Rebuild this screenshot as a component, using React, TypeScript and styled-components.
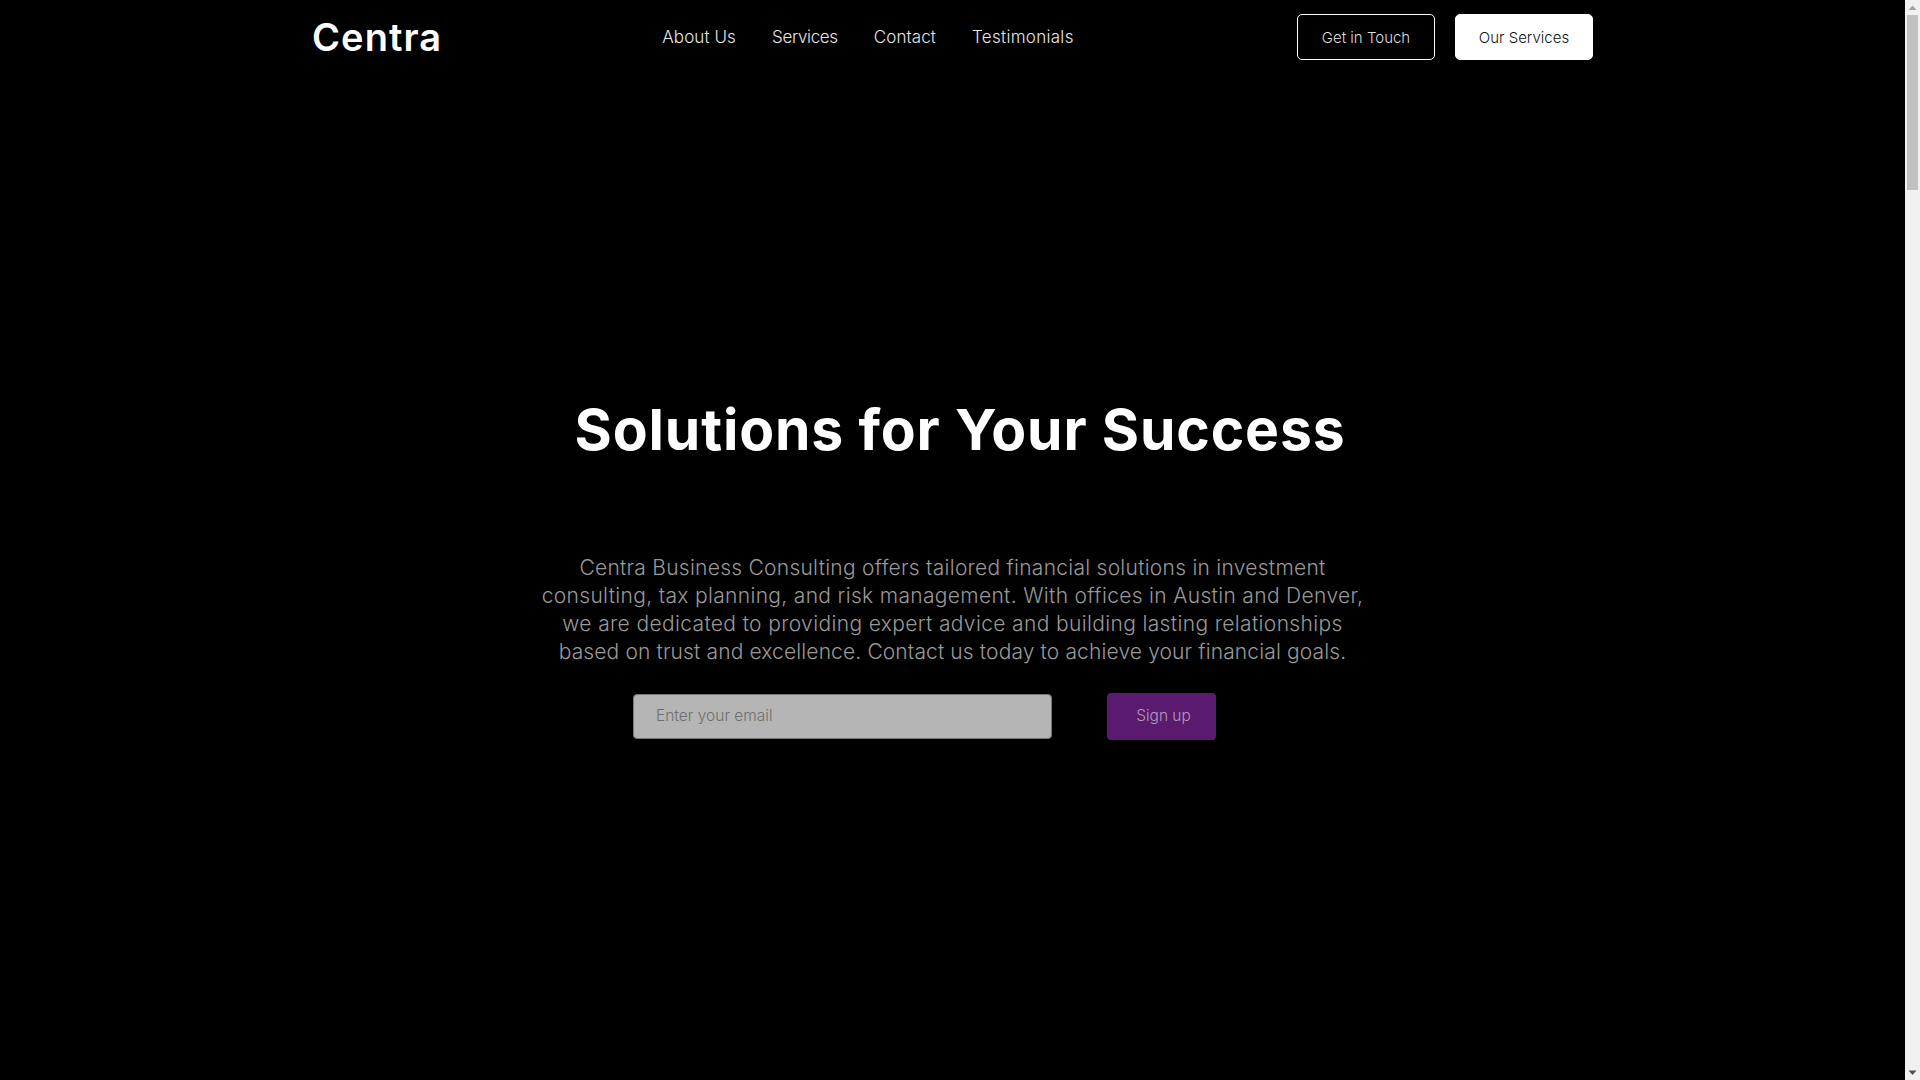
import React from 'react'
import styled, { createGlobalStyle } from 'styled-components'

const GlobalStyle = createGlobalStyle`
	body {
		margin: 0;
		background: #000;
		font-family: Inter, "Liberation Sans", sans-serif;
	}
`

const navLinks = [
	{ label: 'About Us', tracking: 0.1 },
	{ label: 'Services', tracking: -0.35 },
	{ label: 'Contact', tracking: 0.1 },
	{ label: 'Testimonials', tracking: 0.3 }
]

const introLines = [
	{ text: 'Centra Business Consulting offers tailored financial solutions in investment', tracking: 0.26 },
	{ text: 'consulting, tax planning, and risk management. With offices in Austin and Denver,', tracking: 0.33 },
	{ text: 'we are dedicated to providing expert advice and building lasting relationships', tracking: 0.36 },
	{ text: 'based on trust and excellence. Contact us today to achieve your financial goals.', tracking: 0.13 }
]

const App = () => {
	return (
		<Page>
			<GlobalStyle />
			<Main>
				<Header>
					<Logo>Centra</Logo>
					<Nav>
						{navLinks.map(link => (
							<NavLink key={link.label} href="#" $tracking={link.tracking}>{link.label}</NavLink>
						))}
					</Nav>
					<Actions>
						<HeaderButton href="#">Get in Touch</HeaderButton>
						<HeaderButton href="#" $filled>Our Services</HeaderButton>
					</Actions>
				</Header>
				<Hero>
					<Title>Solutions for Your Success</Title>
					<Intro>
						{introLines.map(line => (
							<IntroLine key={line.text} $tracking={line.tracking}>{line.text}</IntroLine>
						))}
					</Intro>
					<SignupForm onSubmit={e => e.preventDefault()}>
						<EmailInput type="email" placeholder="Enter your email" />
						<SignupButton type="submit">Sign up</SignupButton>
					</SignupForm>
				</Hero>
			</Main>
			<Scrollbar>
				<ScrollArrow viewBox="0 0 15 15"><path d="M7.5 5.5 L11.5 10 H3.5 Z" fill="#a3a3a3" /></ScrollArrow>
				<ScrollTrack><ScrollThumb /></ScrollTrack>
				<ScrollArrow viewBox="0 0 15 15"><path d="M3.5 5.5 H11.5 L7.5 10 Z" fill="#505050" /></ScrollArrow>
			</Scrollbar>
		</Page>
	)
}

const Page = styled.div`
	display: flex;
	height: 100vh;
	overflow: hidden;
	background: #000;
	color: #fff;
`
const Main = styled.main`
	flex: 1;
	min-width: 0;
`
const Header = styled.header`
	box-sizing: border-box;
	width: 1281px;
	height: 74px;
	margin: 0 auto;
	padding-top: 14px;
	display: flex;
	justify-content: space-between;
	align-items: flex-start;
`
const Logo = styled.div`
	width: 130px;
	font-size: 38px;
	line-height: 46px;
	font-weight: 600;
	letter-spacing: 1.1px;
	white-space: nowrap;
`
const Nav = styled.nav`
	display: flex;
	gap: 36px;
	height: 46px;
	margin-left: -3px;
	align-items: center;
`
const NavLink = styled.a<{ $tracking: number }>`
	color: #e6e6e6;
	font-size: 17px;
	font-weight: 300;
	letter-spacing: ${p => p.$tracking}px;
	text-decoration: none;
`
const Actions = styled.div`
	display: flex;
	gap: 20px;
`
const HeaderButton = styled.a<{ $filled?: boolean }>`
	box-sizing: border-box;
	width: 138px;
	height: 46px;
	display: flex;
	align-items: center;
	justify-content: center;
	border: 1px solid #fff;
	border-radius: 5px;
	background: ${p => (p.$filled ? '#fff' : 'transparent')};
	color: ${p => (p.$filled ? '#111' : '#ddd')};
	font-size: 15px;
	font-weight: 300;
	text-decoration: none;
`
const Hero = styled.section`
	display: flex;
	flex-direction: column;
	align-items: center;
	padding-top: 322px;
`
const Title = styled.h1`
	margin: 0 0 0 15px;
	font-size: 57px;
	line-height: 68px;
	font-weight: 700;
	letter-spacing: 0.85px;
	white-space: nowrap;
`
const Intro = styled.div`
	margin-top: 90px;
	color: #999;
	font-size: 21px;
	line-height: 28px;
	font-weight: 300;
	text-align: center;
	white-space: nowrap;
`
const IntroLine = styled.p<{ $tracking: number }>`
	margin: 0;
	letter-spacing: ${p => p.$tracking}px;
`
const SignupForm = styled.form`
	display: flex;
	align-items: center;
	gap: 55px;
	margin: 27px 56px 0 0;
	width: 583px;
`
const EmailInput = styled.input`
	box-sizing: border-box;
	width: 419px;
	height: 45px;
	padding: 0 22px 2px;
	border: 1px solid #777;
	border-radius: 4px;
	background: #b5b5b5;
	font-family: inherit;
	font-size: 15.5px;
	font-weight: 300;
	outline: none;
	&::placeholder {
		color: #6f6f6f;
		opacity: 1;
	}
`
const SignupButton = styled.button`
	box-sizing: border-box;
	width: 109px;
	height: 47px;
	padding: 0 0 2px 4px;
	border: none;
	border-radius: 4px;
	background: #5a1a6e;
	color: #b59bbd;
	font-family: inherit;
	font-size: 15.5px;
	font-weight: 300;
`
const Scrollbar = styled.div`
	flex: 0 0 15px;
	display: flex;
	flex-direction: column;
	background: #f1f1f1;
`
const ScrollArrow = styled.svg`
	display: block;
	width: 15px;
	height: 15px;
	flex: none;
`
const ScrollTrack = styled.div`
	flex: 1;
`
const ScrollThumb = styled.div`
	height: 175px;
	margin: 0 2px;
	background: #c1c1c1;
`

export default App
